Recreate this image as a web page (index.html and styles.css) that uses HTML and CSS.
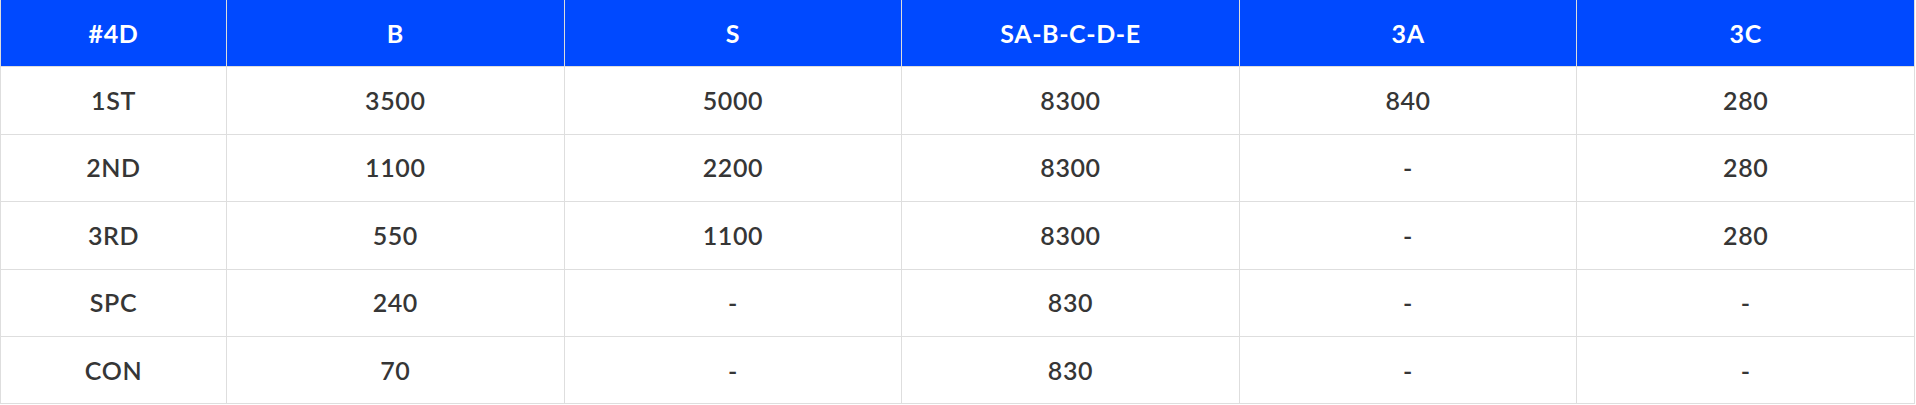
FILE: index.html
```html
<!DOCTYPE html>
<html>
<head>
<meta charset="utf-8">
<link rel="stylesheet" href="styles.css">
</head>
<body>
<table class="rates">
  <colgroup>
    <col class="col-first">
    <col><col><col><col><col>
  </colgroup>
  <thead>
    <tr>
      <th>#4D</th><th>B</th><th>S</th><th>SA-B-C-D-E</th><th>3A</th><th>3C</th>
    </tr>
  </thead>
  <tbody>
    <tr><td>1ST</td><td>3500</td><td>5000</td><td>8300</td><td>840</td><td>280</td></tr>
    <tr><td>2ND</td><td>1100</td><td>2200</td><td>8300</td><td>-</td><td>280</td></tr>
    <tr><td>3RD</td><td>550</td><td>1100</td><td>8300</td><td>-</td><td>280</td></tr>
    <tr><td>SPC</td><td>240</td><td>-</td><td>830</td><td>-</td><td>-</td></tr>
    <tr><td>CON</td><td>70</td><td>-</td><td>830</td><td>-</td><td>-</td></tr>
  </tbody>
</table>
</body>
</html>
```
FILE: styles.css
```css
html, body {
  margin: 0;
  padding: 0;
  background: #ffffff;
}

.rates {
  width: 1915px;
  border-collapse: collapse;
  table-layout: fixed;
  font-family: "Lato", "Open Sans", sans-serif;
  font-size: 25px;
  letter-spacing: 0.6px;
}

.col-first {
  width: 226px;
}

.rates th,
.rates td {
  height: 66.4px;
  padding: 0;
  text-align: center;
  vertical-align: middle;
  line-height: 1;
}

.rates th {
  background: #0049ff;
  color: #ffffff;
  font-weight: 700;
  border-left: 1px solid #dcdcdc;
  border-right: 1px solid #dcdcdc;
}

.rates td {
  color: #363636;
  font-weight: 600;
  border: 1px solid #dedede;
}
```
